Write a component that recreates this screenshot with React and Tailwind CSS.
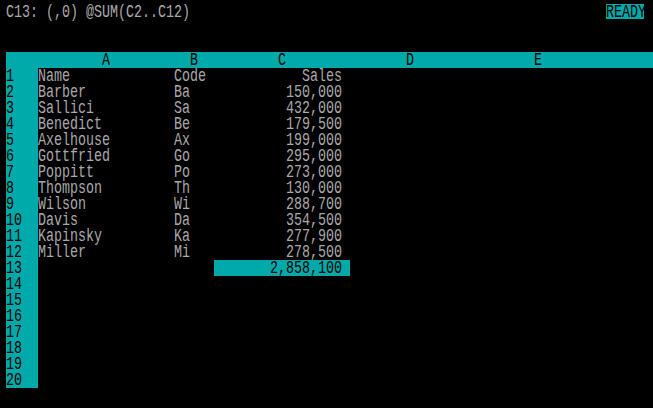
import React from "react";

const rows = [
  ["Name", "Code", "Sales"],
  ["Barber", "Ba", "150,000"],
  ["Sallici", "Sa", "432,000"],
  ["Benedict", "Be", "179,500"],
  ["Axelhouse", "Ax", "199,000"],
  ["Gottfried", "Go", "295,000"],
  ["Poppitt", "Po", "273,000"],
  ["Thompson", "Th", "130,000"],
  ["Wilson", "Wi", "288,700"],
  ["Davis", "Da", "354,500"],
  ["Kapinsky", "Ka", "277,900"],
  ["Miller", "Mi", "278,500"],
  ["", "", "2,858,100"],
];

// glyphs of the old text mode are tall and narrow, so stretch them
const T = ({ children }) => (
  <span className="block whitespace-pre h-[11px] leading-[11px] mt-px scale-y-[1.36] origin-top">{children}</span>
);

const cols = "grid grid-cols-[32px_136px_40px_136px_120px_136px_8px] h-4";

const App = () => {
  const lines = [];
  for (let i = 1; i <= 20; i++) {
    const r = rows[i - 1] || ["", "", ""];
    const total = i === 13;
    lines.push(
      <div key={i} className={cols}>
        <div className="bg-[#00aaaa] text-black">
          <T>{i}</T>
        </div>
        <div>
          <T>{r[0]}</T>
        </div>
        <div>
          <T>{r[1]}</T>
        </div>
        <div className={total ? "bg-[#00aaaa] text-black text-right pr-2" : "text-right pr-2"}>
          <T>{r[2]}</T>
        </div>
        <div></div>
        <div></div>
        <div></div>
      </div>
    );
  }

  return (
    <div
      className="w-[653px] h-[408px] bg-black text-[#aaaaaa] text-[13.333px] leading-4 pt-1 pl-[6px] overflow-hidden"
      style={{ fontFamily: '"Liberation Mono", "DejaVu Sans Mono", monospace' }}
    >
      <div className="flex h-4 w-[638px] justify-between">
        <T>C13: (,0) @SUM(C2..C12)</T>
        <div className="bg-[#00aaaa] text-black w-[38px] h-[15px]">
          <T>READY</T>
        </div>
      </div>
      <div className="h-4"></div>
      <div className="h-4"></div>
      <div className={cols + " bg-[#00aaaa] text-black text-center"}>
        <div></div>
        <div><T>A</T></div>
        <div><T>B</T></div>
        <div><T>C</T></div>
        <div><T>D</T></div>
        <div><T>E</T></div>
        <div></div>
      </div>
      {lines}
    </div>
  );
};

export default App;
